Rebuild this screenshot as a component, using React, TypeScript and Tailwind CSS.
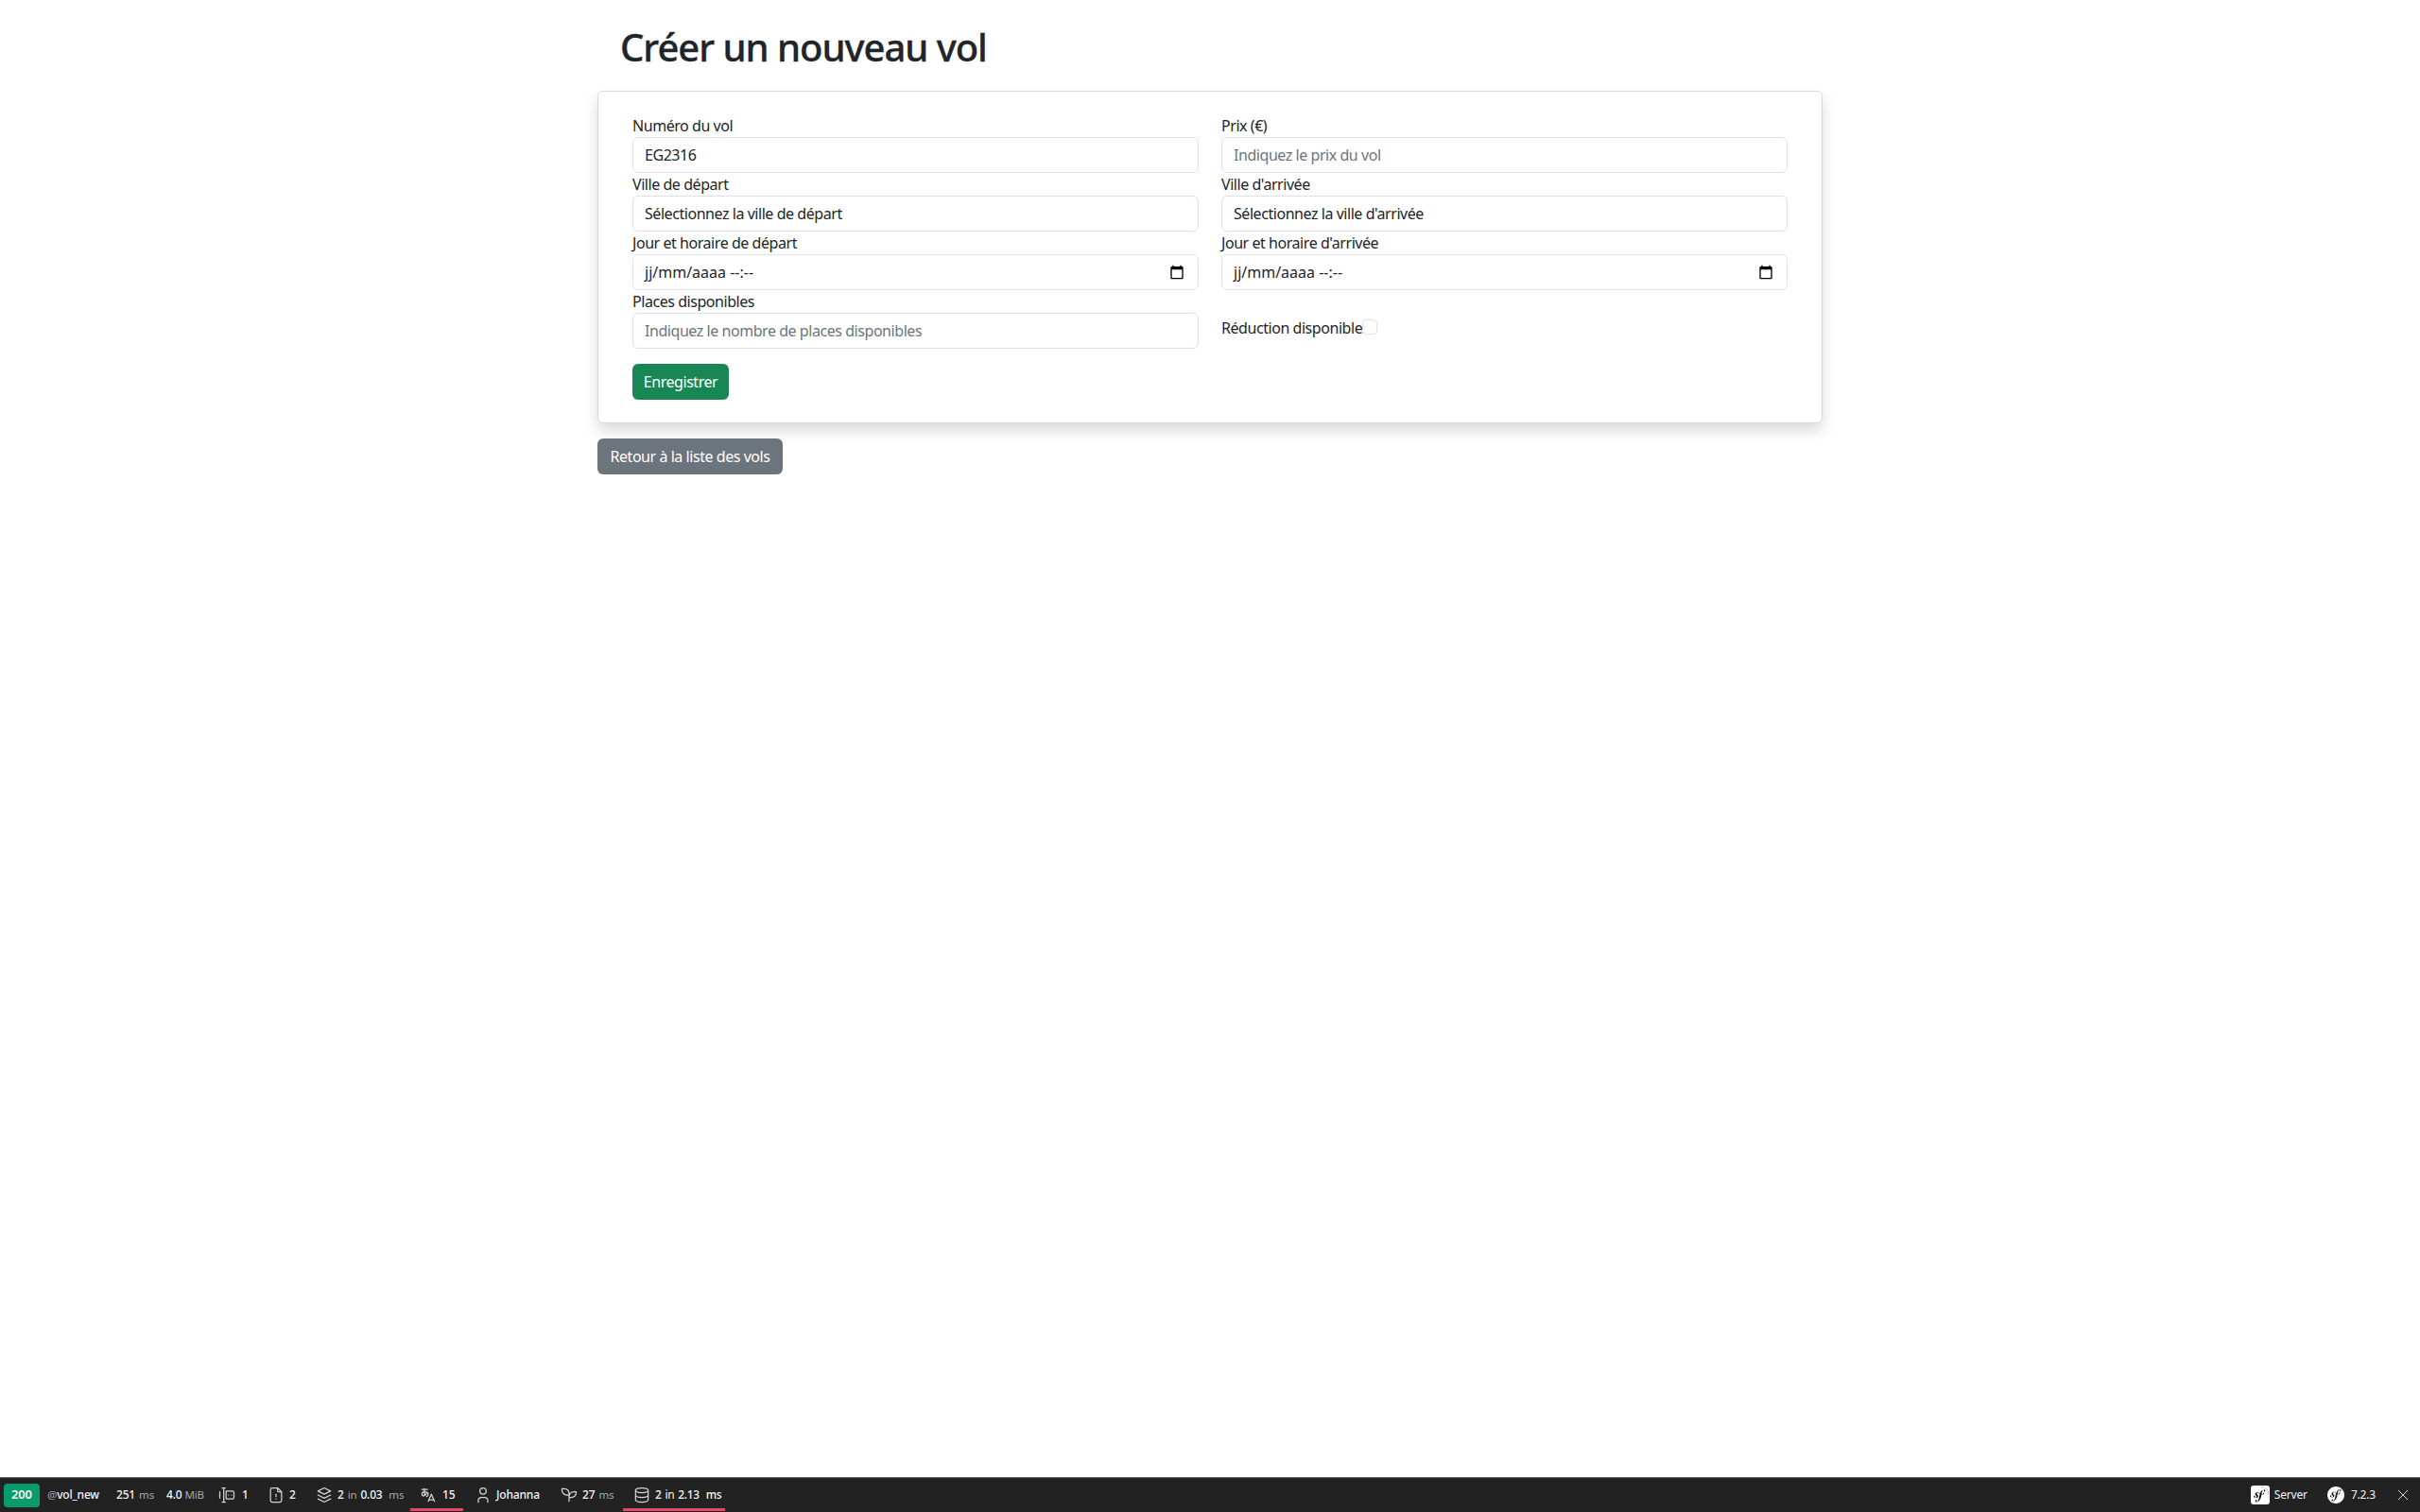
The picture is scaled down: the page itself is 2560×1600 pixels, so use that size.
import type { ReactNode } from "react";
import { SiSymfony } from "react-icons/si";

const Field = ({ label, value, placeholder }: { label: string; value?: string; placeholder?: string }) => (
  <div>
    <label className="block h-6 leading-6">{label}</label>
    <input
      readOnly
      value={value ?? ""}
      placeholder={placeholder}
      className="block h-[38px] w-full rounded-md border border-[#dee2e6] bg-white px-3 text-[#212529] placeholder:text-[#6c757d] outline-none"
    />
  </div>
);

const DateField = ({ label }: { label: string }) => (
  <div>
    <label className="block h-6 leading-6">{label}</label>
    <div className="flex h-[38px] w-full items-center justify-between rounded-md border border-[#dee2e6] bg-white pl-3 pr-[14px]">
      <span className="tracking-normal">jj/mm/aaaa --:--</span>
      <svg viewBox="0 0 24 24" className="h-[16px] w-[16px]" fill="#000">
        <path d="M20 3h-1V1h-2v2H7V1H5v2H4c-1.1 0-2 .9-2 2v16c0 1.1.9 2 2 2h16c1.1 0 2-.9 2-2V5c0-1.1-.9-2-2-2zm0 18H4V8h16v13z" />
      </svg>
    </div>
  </div>
);

const Icon = ({ children }: { children: ReactNode }) => (
  <svg
    viewBox="0 0 24 24"
    className="h-5 w-5 shrink-0"
    fill="none"
    stroke="#d4d4d4"
    strokeWidth={1.5}
    strokeLinecap="round"
    strokeLinejoin="round"
  >
    {children}
  </svg>
);

const Label = ({ children }: { children: ReactNode }) => (
  <span className="text-[11.5px] font-normal text-[#aaa]">{children}</span>
);

const Underline = () => <span className="absolute inset-x-0 bottom-[1px] h-[3px] bg-[#e9446a]" />;

const App = () => {
  return (
    <div className="flex min-h-[1600px] flex-col bg-white font-['Noto_Sans',sans-serif] text-base tracking-[-0.028em] text-[#212529]">
      <div className="mx-auto w-[1296px] flex-1">
        <h1 className="ml-6 mt-[26px] mb-[22px] text-[40px] font-medium leading-[48px] tracking-[-0.026em] [-webkit-text-stroke:0.3px_#212529]">
          Créer un nouveau vol
        </h1>
        <div className="rounded-md border border-[#d5d7da] bg-white p-6 shadow-[0_8px_16px_rgba(0,0,0,0.15)]">
          <div className="grid grid-cols-2 gap-x-6 px-3">
            <Field label="Numéro du vol" value="EG2316" />
            <Field label="Prix (€)" placeholder="Indiquez le prix du vol" />
            <Field label="Ville de départ" value="Sélectionnez la ville de départ" />
            <Field label="Ville d'arrivée" value="Sélectionnez la ville d'arrivée" />
            <DateField label="Jour et horaire de départ" />
            <DateField label="Jour et horaire d'arrivée" />
            <Field label="Places disponibles" placeholder="Indiquez le nombre de places disponibles" />
            <div className="flex items-center pt-[17px]">
              <span>Réduction disponible</span>
              <span className="mb-[2px] h-4 w-4 rounded border border-[#dee2e6] bg-white" />
            </div>
          </div>
          <button className="ml-3 mt-4 h-[38px] w-[102px] rounded-md bg-[#198754] text-white">Enregistrer</button>
        </div>
        <button className="mt-4 h-[38px] w-[196px] rounded-md bg-[#6c757d] text-white">Retour à la liste des vols</button>
      </div>

      {/* Symfony debug toolbar */}
      <div className="flex h-9 items-center justify-between bg-[#222] text-xs font-medium tracking-[-0.015em] text-[#f5f5f5] shadow-[0_-1px_0_rgba(0,0,0,0.6)]">
        <div className="flex h-full items-center">
          <div className="flex w-[46px] items-center pl-1">
            <span className="flex h-[25px] w-[38px] items-center justify-center rounded bg-[#0a9b6d] text-[13px] font-semibold">200</span>
          </div>
          <div className="flex w-[70px] items-center pl-1">
            <Label>@</Label>vol_new
          </div>
          <div className="flex w-[52px] items-center gap-1 pl-[7px]">
            251 <Label>ms</Label>
          </div>
          <div className="flex w-[56px] items-center gap-[3px] pl-2">
            4.0 <Label>MiB</Label>
          </div>
          <div className="flex w-[52px] items-center gap-[6px] pl-[6px]">
            <Icon>
              <path d="M6 3h4M6 21h4M8 3v18M3 8v8M11 7h8a2 2 0 0 1 2 2v6a2 2 0 0 1 -2 2h-8M11 7v10M14 12h.01M18 12h.01" />
            </Icon>
            1
          </div>
          <div className="flex w-[50px] items-center gap-1 pl-[6px]">
            <Icon>
              <path d="M14 3v4a1 1 0 0 0 1 1h4M17 21h-10a2 2 0 0 1 -2 -2v-14a2 2 0 0 1 2 -2h7l5 5v11a2 2 0 0 1 -2 2zM12 17l.01 0M12 11l0 3" />
            </Icon>
            2
          </div>
          <div className="flex w-[108px] items-center gap-1 pl-[7px]">
            <Icon>
              <path d="M12 3l-8 4l8 4l8 -4l-8 -4M4 12l8 4l8 -4M4 17l8 4l8 -4" />
            </Icon>
            <span className="flex items-center gap-1">
              2 <Label>in</Label> 0.03 <Label>&nbsp;ms</Label>
            </span>
          </div>
          <div className="relative flex h-full w-[56px] items-center gap-[5px] pl-[9px]">
            <Icon>
              <path d="M4 5h7M7 4c0 4.846 0 7 .5 8M10 8.5c0 2.286 -2 4.5 -3.5 4.5s-2.5 -1.135 -2.5 -2c0 -2 1 -3 3 -3s5 .57 5 2.857c0 1.524 -.667 2.571 -2 3.143M12 20l4 -9l4 9M19.1 18h-6.2" />
            </Icon>
            15
            <Underline />
          </div>
          <div className="flex w-[95px] items-center gap-1 pl-[11px]">
            <Icon>
              <path d="M8 7a4 4 0 1 0 8 0a4 4 0 0 0 -8 0M6 21v-2a4 4 0 0 1 4 -4h4a4 4 0 0 1 4 4v2" />
            </Icon>
            Johanna
          </div>
          <div className="flex w-[74px] items-center gap-1 pl-[7px]">
            <Icon>
              <path d="M12 10a6 6 0 0 0 -6 -6h-3v2a6 6 0 0 0 6 6h3M12 14a6 6 0 0 1 6 -6h3v1a6 6 0 0 1 -6 6h-3M12 20l0 -10" />
            </Icon>
            <span className="flex items-center gap-1">
              27 <Label>ms</Label>
            </span>
          </div>
          <div className="relative flex h-full w-[108px] items-center gap-1 pl-[10px]">
            <Icon>
              <path d="M4 6a8 3 0 1 0 16 0a8 3 0 1 0 -16 0M4 6v6a8 3 0 0 0 16 0v-6M4 12v6a8 3 0 0 0 16 0v-6" />
            </Icon>
            <span className="flex items-center gap-1 tracking-[-0.03em]">
              2 <span className="font-normal">in</span> 2.13 <span className="ml-[3px]">ms</span>
            </span>
            <Underline />
          </div>
        </div>
        <div className="flex h-full items-center pr-[13px]">
          <span className="relative flex h-5 w-5 items-center justify-center rounded-[3px] bg-white">
            <span className="absolute h-[18px] w-[18px] rounded-full bg-black" />
            <SiSymfony className="relative h-[19px] w-[19px] text-white" />
          </span>
          <span className="ml-[5px] mr-[21px] font-normal">Server</span>
          <SiSymfony className="h-[18px] w-[18px] text-white" />
          <span className="ml-[7px] mr-[24px] font-normal">7.2.3</span>
          <svg viewBox="0 0 10 10" className="h-[10px] w-[10px]" fill="none" stroke="#d4d4d4" strokeWidth={1}>
            <path d="M0 0l10 10M10 0l-10 10" />
          </svg>
        </div>
      </div>
    </div>
  );
};

export default App;
